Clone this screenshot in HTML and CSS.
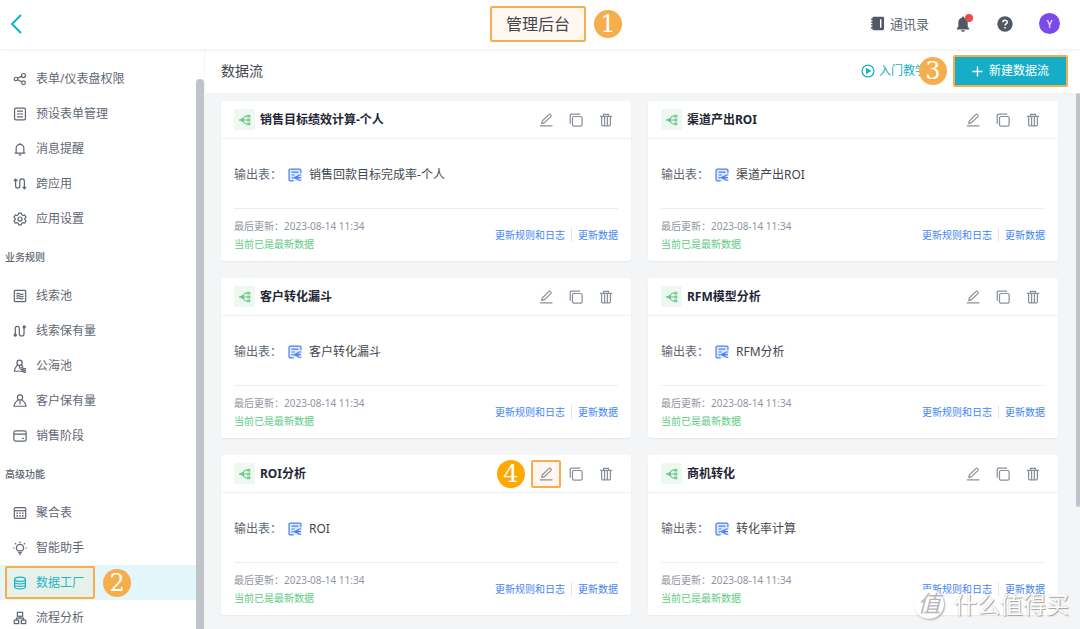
FILE: index.html
```html
<!DOCTYPE html>
<html lang="zh-CN">
<head>
<meta charset="utf-8">
<title>管理后台</title>
<link rel="stylesheet" href="styles.css">
</head>
<body>
<svg class="sprite" aria-hidden="true">
  <symbol id="i-share" viewBox="0 0 16 16"><circle cx="3.4" cy="8" r="2"/><circle cx="12" cy="4" r="2.3"/><circle cx="12" cy="12.2" r="2.1"/><path d="M5.3 7.2 9.9 5M5.3 8.8l4.8 2.4"/></symbol>
  <symbol id="i-form" viewBox="0 0 16 16"><rect x="1.8" y="1.2" width="12.4" height="13.6" rx="1.6"/><path d="M4.6 4.6h6.8M4.6 8h6.8M4.6 11.4h6.8"/></symbol>
  <symbol id="i-bell" viewBox="0 0 16 16"><path d="M2 12.800h12M3.600 12.800V7a4.400 4.400 0 0 1 8.800 0v5.800M8 2.600V1M6.600 14.600h2.800"/></symbol>
  <symbol id="i-cross" viewBox="0 0 16 16"><path d="M1 4.6 3 2.4l2 2.2M3 2.8v7.400a2.400 2.400 0 0 0 4.800 0V4.800a2.600 2.600 0 0 1 5.200 0v7.800M11 11.200l2 2.200 2-2.200"/></symbol>
  <symbol id="i-gear" viewBox="0 0 16 16"><path d="M6.500 1.200h3l.5 1.900 1.500.9 1.900-.6 1.500 2.600-1.400 1.400v1.300l1.400 1.400-1.500 2.600-1.900-.6-1.500.9-.5 1.800h-3L6 13l-1.500-.9-1.900.6-1.500-2.600 1.400-1.400V7.400L1.100 6l1.500-2.600 1.900.6L6 3.100z"/><circle cx="8" cy="8" r="2.300"/></symbol>
  <symbol id="i-pool" viewBox="0 0 16 16"><rect x="1.500" y="1.500" width="13" height="13" rx="1"/><path d="M4 6c1.400-1.600 2.600-1.200 4-.3s2.600 1 4-.4M4 8.600c1.400-1.600 2.600-1.200 4-.3s2.600 1 4-.4M4 11.200c1.400-1.600 2.600-1.200 4-.3s2.600 1 4-.4"/></symbol>
  <symbol id="i-flow" viewBox="0 0 16 16"><path d="M2.600 12.500V5a2.300 2.300 0 0 1 4.600 0v6a2.700 2.700 0 0 0 5.400 0V4"/><circle cx="2.600" cy="12.700" r="1.200" fill="currentColor"/><circle cx="12.800" cy="3.300" r="1.200" fill="currentColor"/></symbol>
  <symbol id="i-sea" viewBox="0 0 16 16"><circle cx="7.500" cy="4.200" r="3"/><path d="M5.800 6.800C3.600 8 2 10.500 1.600 14h6.200M9.200 6.800c1 .5 1.700 1.200 2.300 2M7.500 8v3"/><path d="M8.500 10.600q1.600-1.400 3.200 0t3.200 0M8.500 12.600q1.600-1.400 3.200 0t3.200 0M8.500 14.600q1.600-1.400 3.200 0t3.200 0"/></symbol>
  <symbol id="i-client" viewBox="0 0 16 16"><circle cx="8" cy="4" r="3"/><path d="M6.200 6.800C3.600 8 1.600 10.500 1.200 14h13.600c-.4-3.500-2.400-6-5-7.200M8 8v3.600"/></symbol>
  <symbol id="i-card" viewBox="0 0 16 16"><rect x="1" y="2.200" width="14" height="11.600" rx="1.800"/><path d="M1 5.800h14M10.400 10.800h2"/></symbol>
  <symbol id="i-table" viewBox="0 0 16 16"><rect x="1.500" y="1.800" width="13" height="12.400" rx="1.400"/><path d="M2 5.400h12"/><path d="M4 8.200h1.600M7.200 8.200h1.600M10.400 8.200H12M4 11.300h1.600M7.200 11.300h1.600M10.400 11.300H12" stroke-width="1.800"/></symbol>
  <symbol id="i-bulb" viewBox="0 0 16 16"><path d="M5.800 11.400C4.300 10.500 3.900 9.100 3.900 8a4.100 4.100 0 0 1 8.200 0c0 1.100-.4 2.500-1.900 3.400zM6 13.200h4M7 14.900h2M8 2.400V.7M3.600 3.800 2.300 2.500M12.400 3.800l1.300-1.300M1.800 8H.2M15.800 8h-1.600"/></symbol>
  <symbol id="i-db" viewBox="0 0 16 16"><ellipse cx="8" cy="3.700" rx="6.200" ry="2.500"/><path d="M1.800 3.700v8.600c0 3.300 12.400 3.300 12.400 0V3.700M1.800 6.600c0 3.300 12.400 3.300 12.400 0M1.800 9.500c0 3.300 12.400 3.300 12.400 0"/></symbol>
  <symbol id="i-org" viewBox="0 0 16 16"><rect x="5" y="1.500" width="6" height="4.500"/><rect x="1.500" y="10.400" width="5" height="4"/><rect x="9.500" y="10.400" width="5" height="4"/><path d="M8 6v2.200M4 10.400V8.200h8v2.200"/></symbol>
  <symbol id="i-edit" viewBox="0 0 16 16"><path d="M1 14.700h14.400M3.200 11.800l.7-3 7.300-7a1.300 1.300 0 0 1 1.900 0l.4.400a1.300 1.300 0 0 1 0 1.900l-7.300 7z"/></symbol>
  <symbol id="i-copy" viewBox="0 0 16 16"><rect x="4" y="4" width="11" height="11" rx="1.600"/><path d="M1.400 12.400V2.800a1.500 1.500 0 0 1 1.500-1.500h9.900"/></symbol>
  <symbol id="i-trash" viewBox="0 0 16 16"><path d="M1 3.800h14M5.200 3.600V1.500h5.600v2.100M3 4v9.400a1.400 1.400 0 0 0 1.400 1.400h7.200a1.400 1.400 0 0 0 1.400-1.400V4M6.400 4v10.600M9.600 4v10.600"/></symbol>
  <symbol id="i-node" viewBox="0 0 16 16"><path d="M5 8h7M12 2.800H9.500A4.500 4.500 0 0 0 5.800 8a4.500 4.500 0 0 0 3.700 5.200H12"/><path d="M.6 8l5-2v4z" fill="currentColor"/><rect x="11.800" y="1.800" width="2.600" height="2.200"/><rect x="11.800" y="6.900" width="2.600" height="2.200"/><rect x="11.800" y="12" width="2.600" height="2.200"/></symbol>
  <symbol id="i-output" viewBox="0 0 16 16"><rect x="1.200" y="1.200" width="13.600" height="13.600" rx="1.500" fill="#dfe9ff" stroke="none"/><path d="M6.500 14.800H2.700a1.500 1.500 0 0 1-1.500-1.500V2.700a1.500 1.500 0 0 1 1.500-1.500h10.600a1.500 1.500 0 0 1 1.500 1.500V6M4 4.800h8M4 8h3.600M4 11.200h2"/><path d="M7.200 11l3-1.300v2.600zM10.200 11H15M15.400 8h-2.200a2.600 2.600 0 0 0-2.200 3 2.600 2.600 0 0 0 2.200 3h2.200"/></symbol>
  <symbol id="i-play" viewBox="0 0 16 16"><circle cx="8" cy="8" r="6.800"/><path d="M6.500 5.500 10.600 8l-4.100 2.500z" fill="currentColor"/></symbol>
</svg>

<header class="topbar">
  <button class="back" aria-label="返回"><svg viewBox="0 0 12 20"><path d="M11 1 2 10l9 9"/></svg></button>
  <h1 class="title marked">管理后台<span class="step step-right">1</span></h1>
  <nav class="tools">
    <a class="contacts" href="#"><svg viewBox="0 0 16 16"><path class="solid" d="M4 .8h9.500A1.500 1.500 0 0 1 15 2.300v11.400a1.500 1.500 0 0 1-1.500 1.500H4a1.500 1.500 0 0 1-1.500-1.500V2.300A1.500 1.500 0 0 1 4 .8z"/><path d="M1 3.500h3M1 6.500h3M1 9.500h3M1 12.500h3"/><path class="light" d="M11.400 3.500v9"/></svg>通讯录</a>
    <button class="tool" aria-label="通知"><svg viewBox="0 0 16 16"><path class="solid" d="M8 .6c.7 0 1 .5 1 1.100 2.300.5 3.700 2.300 3.700 4.700v4.200l1.500 2.200v.8H1.800v-.8l1.500-2.200V6.400c0-2.400 1.400-4.200 3.700-4.700 0-.6.3-1.100 1-1.100zM6 14.200h4c-.3 1-1.100 1.500-2 1.500s-1.700-.5-2-1.500z"/></svg><i class="dot"></i></button>
    <button class="tool" aria-label="帮助"><svg viewBox="0 0 16 16"><circle class="solid" cx="8" cy="8" r="7.700"/><path class="light" d="M5.800 6.300c0-1.300.9-2.100 2.200-2.100s2.200.8 2.200 2c0 1.600-2.200 1.600-2.200 3.300M8 10.900v1.500"/></svg></button>
    <button class="avatar" aria-label="账户">Y</button>
  </nav>
</header>

<div class="shell">
  <nav class="sidebar">
    <div class="menu">
      <a href="#"><svg><use href="#i-share"/></svg>表单/仪表盘权限</a>
      <a href="#"><svg><use href="#i-form"/></svg>预设表单管理</a>
      <a href="#"><svg><use href="#i-bell"/></svg>消息提醒</a>
      <a href="#"><svg><use href="#i-cross"/></svg>跨应用</a>
      <a href="#"><svg><use href="#i-gear"/></svg>应用设置</a>
      <h2>业务规则</h2>
      <a href="#"><svg><use href="#i-pool"/></svg>线索池</a>
      <a href="#"><svg><use href="#i-flow"/></svg>线索保有量</a>
      <a href="#"><svg><use href="#i-sea"/></svg>公海池</a>
      <a href="#"><svg><use href="#i-client"/></svg>客户保有量</a>
      <a href="#"><svg><use href="#i-card"/></svg>销售阶段</a>
      <h2>高级功能</h2>
      <a href="#"><svg><use href="#i-table"/></svg>聚合表</a>
      <a href="#"><svg><use href="#i-bulb"/></svg>智能助手</a>
      <a href="#" class="active"><span class="pick marked"><svg><use href="#i-db"/></svg>数据工厂<span class="step step-right">2</span></span></a>
      <a href="#"><svg><use href="#i-org"/></svg>流程分析</a>
    </div>
    <div class="track"></div>
  </nav>

  <main class="content">
    <div class="bar">
      <h2>数据流</h2>
      <div class="bar-actions">
        <a class="guide" href="#"><svg><use href="#i-play"/></svg>入门教学</a>
        <button class="create marked"><svg viewBox="0 0 12 12"><path d="M6 .5v11M.5 6h11"/></svg>新建数据流<span class="step step-left">3</span></button>
      </div>
    </div>
    <div class="scroller">
      <div class="cards">
        <article class="card">
          <header><span class="badge"><svg><use href="#i-node"/></svg></span><h3>销售目标绩效计算-个人</h3><button aria-label="编辑"><svg><use href="#i-edit"/></svg></button><button aria-label="复制"><svg><use href="#i-copy"/></svg></button><button aria-label="删除"><svg><use href="#i-trash"/></svg></button></header>
          <div class="output"><span>输出表：</span><svg><use href="#i-output"/></svg><b>销售回款目标完成率-个人</b></div>
          <footer><div class="status"><time>最后更新：2023-08-14 11:34</time><em>当前已是最新数据</em></div><div class="links"><a href="#">更新规则和日志</a><a href="#">更新数据</a></div></footer>
        </article>
        <article class="card">
          <header><span class="badge"><svg><use href="#i-node"/></svg></span><h3>渠道产出ROI</h3><button aria-label="编辑"><svg><use href="#i-edit"/></svg></button><button aria-label="复制"><svg><use href="#i-copy"/></svg></button><button aria-label="删除"><svg><use href="#i-trash"/></svg></button></header>
          <div class="output"><span>输出表：</span><svg><use href="#i-output"/></svg><b>渠道产出ROI</b></div>
          <footer><div class="status"><time>最后更新：2023-08-14 11:34</time><em>当前已是最新数据</em></div><div class="links"><a href="#">更新规则和日志</a><a href="#">更新数据</a></div></footer>
        </article>
        <article class="card">
          <header><span class="badge"><svg><use href="#i-node"/></svg></span><h3>客户转化漏斗</h3><button aria-label="编辑"><svg><use href="#i-edit"/></svg></button><button aria-label="复制"><svg><use href="#i-copy"/></svg></button><button aria-label="删除"><svg><use href="#i-trash"/></svg></button></header>
          <div class="output"><span>输出表：</span><svg><use href="#i-output"/></svg><b>客户转化漏斗</b></div>
          <footer><div class="status"><time>最后更新：2023-08-14 11:34</time><em>当前已是最新数据</em></div><div class="links"><a href="#">更新规则和日志</a><a href="#">更新数据</a></div></footer>
        </article>
        <article class="card">
          <header><span class="badge"><svg><use href="#i-node"/></svg></span><h3>RFM模型分析</h3><button aria-label="编辑"><svg><use href="#i-edit"/></svg></button><button aria-label="复制"><svg><use href="#i-copy"/></svg></button><button aria-label="删除"><svg><use href="#i-trash"/></svg></button></header>
          <div class="output"><span>输出表：</span><svg><use href="#i-output"/></svg><b>RFM分析</b></div>
          <footer><div class="status"><time>最后更新：2023-08-14 11:34</time><em>当前已是最新数据</em></div><div class="links"><a href="#">更新规则和日志</a><a href="#">更新数据</a></div></footer>
        </article>
        <article class="card">
          <header><span class="badge"><svg><use href="#i-node"/></svg></span><h3>ROI分析</h3><button class="focus" aria-label="编辑"><svg><use href="#i-edit"/></svg><span class="step step-left strong">4</span></button><button aria-label="复制"><svg><use href="#i-copy"/></svg></button><button aria-label="删除"><svg><use href="#i-trash"/></svg></button></header>
          <div class="output"><span>输出表：</span><svg><use href="#i-output"/></svg><b>ROI</b></div>
          <footer><div class="status"><time>最后更新：2023-08-14 11:34</time><em>当前已是最新数据</em></div><div class="links"><a href="#">更新规则和日志</a><a href="#">更新数据</a></div></footer>
        </article>
        <article class="card">
          <header><span class="badge"><svg><use href="#i-node"/></svg></span><h3>商机转化</h3><button aria-label="编辑"><svg><use href="#i-edit"/></svg></button><button aria-label="复制"><svg><use href="#i-copy"/></svg></button><button aria-label="删除"><svg><use href="#i-trash"/></svg></button></header>
          <div class="output"><span>输出表：</span><svg><use href="#i-output"/></svg><b>转化率计算</b></div>
          <footer><div class="status"><time>最后更新：2023-08-14 11:34</time><em>当前已是最新数据</em></div><div class="links"><a href="#">更新规则和日志</a><a href="#">更新数据</a></div></footer>
        </article>
      </div>
      <div class="thumb"></div>
    </div>
  </main>
</div>

<div class="watermark"><span class="seal">值</span><span>什么值得买</span></div>
</body>
</html>
```
FILE: styles.css
```css
* { box-sizing: border-box; }

body {
  margin: 0;
  height: 100vh;
  display: flex;
  flex-direction: column;
  overflow: hidden;
  background: #f4f5f7;
  color: #5f6774;
  font: 12px/18px "Noto Sans", "Noto Sans CJK SC", sans-serif;
}

h1, h2, h3 { margin: 0; font-weight: 400; }
a { color: inherit; text-decoration: none; }
button { border: 0; padding: 0; background: none; color: inherit; font: inherit; cursor: pointer; }
svg { display: block; flex: none; width: 14px; height: 14px; fill: none; stroke: currentColor; stroke-width: 1.4; }
.sprite { position: absolute; width: 0; height: 0; }
.solid { fill: currentColor; stroke: none; }
.light { stroke: #fff; stroke-width: 1.5; }

.topbar {
  display: grid;
  grid-template-columns: 1fr auto 1fr;
  align-items: center;
  height: 49px;
  flex: none;
  padding: 0 14px 2px 10px;
  background: #fff;
  box-shadow: 0 1px 4px rgba(0, 0, 0, 0.08);
  z-index: 2;
}
.back { justify-self: start; color: #0fb0cc; }
.back svg { width: 12px; height: 20px; stroke-width: 2; }

.marked { position: relative; border: 2px solid #f5ae4b; border-radius: 2px; }
.title {
  padding: 3px 14px;
  background: #fff7f0;
  color: #42464e;
  font-size: 16px;
  line-height: 26px;
}
.step {
  position: absolute;
  top: 50%;
  width: 28px;
  height: 28px;
  margin-top: -14px;
  border-radius: 50%;
  background: #f5ae4b;
  color: #fff;
  font: 24px/28px "DejaVu Serif", serif;
  text-align: center;
}
.step-right { left: 100%; margin-left: 10px; }
.step-left { right: 100%; margin-right: 8px; }
.strong { background: #ffa800; }

.tools { justify-self: end; display: flex; align-items: center; gap: 26px; margin-right: 6px; }
.contacts { display: flex; align-items: center; gap: 5px; font-size: 13px; }
.contacts svg { width: 15px; height: 15px; color: #515967; }
.tool { position: relative; color: #515967; }
.tool svg { width: 16px; height: 16px; }
.dot { position: absolute; top: -2px; right: -2px; width: 8px; height: 8px; border-radius: 50%; background: #eb4b4b; }
.avatar { width: 21px; height: 21px; border-radius: 50%; background: #7c49ea; color: #fff; font-size: 10px; }

.shell { display: flex; flex: 1; min-height: 0; }
.sidebar { display: flex; flex: none; width: 204px; background: #fff; overflow: hidden; }
.menu { flex: 1; padding-top: 12px; }
.menu a { display: flex; align-items: center; gap: 9px; height: 35px; padding-left: 13px; }
.menu h2 { padding-left: 5px; font-size: 10px; line-height: 42px; font-weight: 500; }
.menu .active { padding-left: 5px; background: #e3f6f9; color: #1fb4c9; }
.pick {
  display: flex;
  align-items: center;
  gap: 9px;
  height: 33px;
  padding: 0 9px 0 6px;
  background: #e6f1e9;
}
.track { width: 8px; margin-top: 30px; border-radius: 4px 4px 0 0; background: #c1c3ca; }

.content { display: flex; flex: 1; flex-direction: column; min-width: 0; border-left: 1px solid #f4f5f7; }
.bar {
  display: flex;
  align-items: center;
  justify-content: space-between;
  height: 44px;
  flex: none;
  padding: 0 12px 0 16px;
  background: #fff;
}
.bar h2 { color: #42464e; font-size: 14px; }
.bar-actions { display: flex; align-items: center; gap: 26px; }
.guide { display: flex; align-items: center; gap: 4px; color: #1aafc8; }
.create {
  display: flex;
  align-items: center;
  gap: 6px;
  height: 32px;
  padding: 0 17px;
  background: #16aec7;
  color: #fff;
}
.create svg { width: 11px; height: 11px; stroke-width: 1.5; }

.scroller { display: flex; flex: 1; align-items: flex-start; min-height: 0; }
.cards {
  display: grid;
  flex: 1;
  grid-template-columns: 1fr 1fr;
  gap: 17px;
  padding: 8px 18px 14px 16px;
}
.thumb { width: 4px; height: 77.3%; border-radius: 4px; background: #c1c3ca; }

.card { border-radius: 3px; background: #fff; box-shadow: 0 1px 2px rgba(0, 0, 0, 0.06); }
.card header {
  display: flex;
  align-items: center;
  height: 38px;
  padding: 0 10px 0 13px;
  border-bottom: 1px solid #f0f1f3;
  color: #8a9099;
}
.badge { display: grid; place-items: center; width: 21px; height: 21px; border-radius: 2px; background: #edf8f1; color: #66c78a; }
.badge svg { width: 12px; height: 12px; }
.card h3 { flex: 1; margin-left: 5px; color: #1f2736; font-size: 12px; font-weight: 700; }
.card header button { display: grid; place-items: center; width: 30px; height: 28px; }
.card header .focus {
  position: relative;
  border: 2px solid #f5ae4b;
  border-radius: 2px;
  background: #fff7ef;
}
.output { display: flex; align-items: center; height: 69px; padding: 2px 13px 0; }
.output svg { margin: 0 7px 0 6px; color: #4a80ee; }
.output b { color: #42464e; font-weight: 400; }
.card footer {
  display: flex;
  align-items: center;
  justify-content: space-between;
  height: 53px;
  margin: 0 13px;
  border-top: 1px solid #ecedf0;
  font-size: 10px;
}
.status { display: flex; flex-direction: column; color: #8f959f; }
.status em { color: #5fcb85; font-style: normal; }
.links { display: flex; color: #4585ee; line-height: 14px; }
.links a + a { margin-left: 6px; padding-left: 6px; border-left: 1px solid #e2e4e8; }

.watermark {
  position: absolute;
  right: 11px;
  bottom: 9px;
  z-index: 3;
  display: flex;
  align-items: center;
  gap: 10px;
  color: #fff;
  font-size: 23px;
  line-height: 32px;
  text-shadow: 1px 1px 1px #a0a0a0, 0 0 1px #b4b4b4;
  pointer-events: none;
}
.seal {
  width: 30px;
  height: 30px;
  border-radius: 50%;
  background: #fff;
  box-shadow: 1px 1px 2px #aaa;
  color: #b8b8b8;
  font-style: italic;
  line-height: 28px;
  text-align: center;
  text-shadow: none;
}
```
